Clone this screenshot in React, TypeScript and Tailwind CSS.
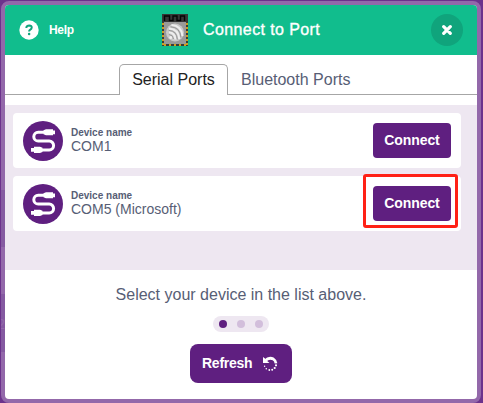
import React from "react";

function CableIcon() {
  return (
    <svg width="40" height="40" viewBox="0 0 40 40" className="shrink-0">
      <circle cx="20" cy="20" r="20" fill="#5f1f80" />
      <path
        d="M22 11.3 H15.2 A4.4 4.4 0 0 0 15.2 20.1 H26.2 A4.4 4.4 0 0 1 26.2 28.9 H17"
        fill="none"
        stroke="#fff"
        strokeWidth="3"
      />
      <path d="M20.5 9.2 L23 8.2 H30 V9.4 H32 V13.2 H30 V14.2 H23 L20.5 13.2 Z" fill="#fff" />
      <path d="M19.5 26.8 L17 25.8 H11 V27 H8 V30.8 H11 V32 H17 L19.5 31 Z" fill="#fff" />
    </svg>
  );
}

function ChipIcon() {
  return (
    <svg width="26" height="32" viewBox="0 0 26 32">
      <path d="M0 0H26V32H0Z" fill="#3b3c3b" />
      <path d="M0 0H26V8H0Z" fill="#363636" />
      <path d="M2.5 7V2H7.5V6.5H11V2H15V6.5H18.5V2H22.5V7" fill="none" stroke="#050505" strokeWidth="1.4" />
      <path d="M1 9V31M25 9V31" stroke="#cf9d20" strokeWidth="2" strokeDasharray="2 2" />
      <path d="M2 31H24" stroke="#cf9d20" strokeWidth="2" strokeDasharray="2 3" />
      <path d="M2 8H24V30H2Z" fill="#999" />
      <circle cx="13" cy="18.5" r="9" fill="#c9c9c9" />
      <path d="M9.5 11Q19.5 11.5 20.5 22M7 14.5Q16.5 15 17.3 25M7 18.3Q12.8 18.8 13.5 25.5" fill="none" stroke="#eee" strokeWidth="2" />
      <path d="M8.5 12.8Q18 13 19 23.5M6.7 16.4Q14.7 16.7 15.4 25.5M6.8 20.4Q10.8 20.8 11.5 25" fill="none" stroke="#969696" strokeWidth="1" />
      <circle cx="8.7" cy="23.4" r="1.5" fill="#eee" />
    </svg>
  );
}

function HelpIcon() {
  return (
    <svg width="20" height="20" viewBox="0 0 20 20">
      <circle cx="10" cy="10" r="9.7" fill="#fff" />
      <path d="M7.4 8V7.3Q7.8 5.4 10.2 5.4Q12.8 5.5 12.7 7.7Q12.6 9 11 9.8Q10.1 10.3 10.1 11.5" fill="none" stroke="#10a47c" strokeWidth="2" />
      <circle cx="10.1" cy="14" r="1.25" fill="#10a47c" />
    </svg>
  );
}

function RefreshIcon() {
  return (
    <svg width="16" height="16" viewBox="0 0 16 16" className="shrink-0">
      <path d="M1 1V7H7.5L5.5 5.2L3 2.5Z" fill="#fff" />
      <path d="M3.2 4.8Q7 .7 11.4 3.1Q13.8 4.6 14 7.4" fill="none" stroke="#fff" strokeWidth="2.8" />
      <g fill="#fff">
        <circle cx="14" cy="9.3" r="1.1" />
        <circle cx="12.7" cy="12" r="1.1" />
        <circle cx="10.2" cy="13.8" r="1" />
        <circle cx="7.3" cy="14" r=".9" />
        <circle cx="4.3" cy="12.7" r=".8" />
        <circle cx="2.6" cy="10.3" r=".7" />
      </g>
    </svg>
  );
}

function DeviceRow({ name, highlighted = false }: { name: string; highlighted?: boolean }) {
  return (
    <div className="flex h-[55px] w-[448px] items-center rounded-[4px] bg-white px-[10px]">
      <CableIcon />
      <div className="ml-2 flex-1 pb-px text-[#575e75]">
        <div className="h-[13px] text-[10px] leading-[13px] font-bold">Device name</div>
        <div className="h-[15px] text-[14px] leading-[15px]">{name}</div>
      </div>
      <div className="relative">
        <button className="block h-[35px] w-[78px] rounded-[4px] bg-[#5f1f80] text-[14px] leading-[35px] font-bold tracking-[-0.1px] text-white">
          Connect
        </button>
        {highlighted && (
          <div className="absolute -top-3 -left-[10px] h-[54px] w-[95px] rounded-[3px] border-3 border-[#ff2116]" />
        )}
      </div>
    </div>
  );
}

export default function App() {
  return (
    <div className="relative h-[403px] w-[483px] overflow-hidden bg-[#6c328c] pt-px pl-px font-['Liberation_Sans',Arial,sans-serif]">
      <div className="h-[402px] w-[480px] rounded-[8px] border-4 border-[#9368aa] bg-[#9368aa]">
        <div className="flex h-[394px] flex-col overflow-hidden rounded-[4px] bg-white">
          <header className="flex h-[50px] shrink-0 items-center bg-[#11bd8d] text-white">
            <div className="flex w-[157px] items-center gap-[10px] pl-[14px]">
              <HelpIcon />
              <span className="text-[12px] font-bold tracking-[-0.3px]">Help</span>
            </div>
            <ChipIcon />
            <h1 className="ml-[15px] flex-1 text-[16px] leading-5 font-medium tracking-[0.4px] [-webkit-text-stroke:0.35px_white]">Connect to Port</h1>
            <button className="mr-[14px] flex size-8 items-center justify-center rounded-full bg-[#10a47c]">
              <svg width="10" height="10" viewBox="0 0 10 10">
                <path d="M1.7 1.7L8.3 8.3M8.3 1.7L1.7 8.3" stroke="#fff" strokeWidth="3.2" strokeLinecap="round" />
              </svg>
            </button>
          </header>
          <nav className="flex h-[50px] shrink-0 pt-[9px]">
            <div className="h-[31px] w-[114px] border-b border-[#a6a6a6]" />
            <div className="h-[31px] w-[109px] rounded-t-[5px] border border-b-0 border-[#a6a6a6] text-center text-[16px] leading-[30px] text-[#222]">
              Serial Ports
            </div>
            <div className="h-[31px] flex-1 border-b border-[#a6a6a6] pl-[13px] text-[16px] leading-8 text-[#575e75]">
              Bluetooth Ports
            </div>
          </nav>
          <section className="flex h-[165px] shrink-0 flex-col gap-2 bg-[#eee7f1] pt-2 pl-2">
            <DeviceRow name="COM1" />
            <DeviceRow name="COM5 (Microsoft)" highlighted />
          </section>
          <footer className="flex flex-1 flex-col items-center pt-[14px]">
            <p className="text-[16px] leading-[22px] text-[#575e75]">Select your device in the list above.</p>
            <div className="mt-[10px] flex h-4 w-14 items-center justify-center gap-[10px] rounded-full bg-[#eee7f1]">
              <span className="size-2 rounded-full bg-[#5f1f80]" />
              <span className="size-2 rounded-full bg-[#d2bedb]" />
              <span className="size-2 rounded-full bg-[#d2bedb]" />
            </div>
            <button className="mt-3 flex h-[39px] w-[102px] items-center rounded-[8px] bg-[#5f1f80] pl-3 text-[14px] font-bold text-white">
              <span className="w-[50px] tracking-[-0.25px]">Refresh</span>
              <span className="ml-[10px] pt-px"><RefreshIcon /></span>
            </button>
          </footer>
        </div>
      </div>
      <div className="absolute top-[190px] left-px h-[57px] w-1 bg-[#855aa1]" />
      <div className="absolute top-[294px] left-px h-[58px] w-1 overflow-hidden bg-[#855aa1]">
        <span className="absolute top-[20px] right-0 text-[14px] leading-5 text-[#9368aa]">2</span>
      </div>
    </div>
  );
}
